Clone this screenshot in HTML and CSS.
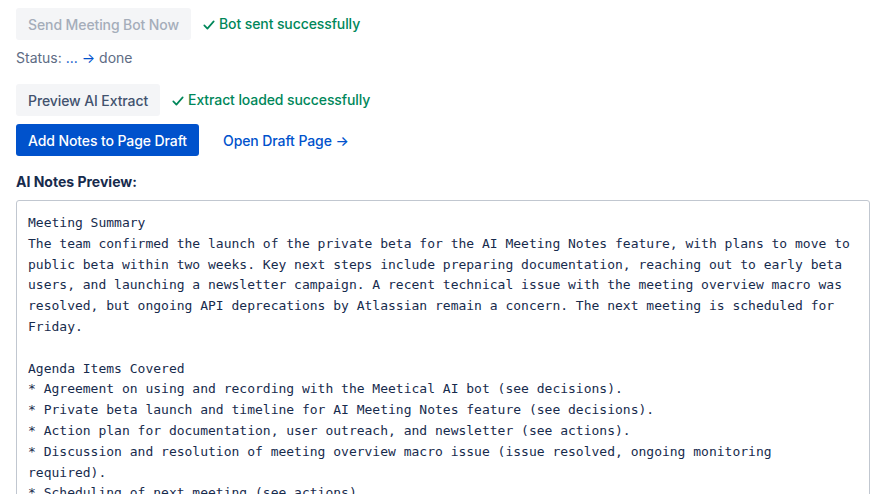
FILE: index.html
```html
<!DOCTYPE html>
<html lang="en">
<head>
<meta charset="utf-8">
<title>AI Meeting Notes</title>
<link rel="stylesheet" href="styles.css">
</head>
<body>
<main class="panel">
  <div class="row">
    <button class="btn btn-disabled" disabled>Send Meeting Bot Now</button>
    <span class="success"><svg class="check" width="12" height="12" viewBox="0 0 12 12"><path d="M1.3 6.4 L4.4 9.6 L10.7 2.4" fill="none" stroke="currentColor" stroke-width="1.7" stroke-linecap="round" stroke-linejoin="round"/></svg>Bot sent successfully</span>
  </div>
  <p class="status">Status: <span class="accent">...</span> <span class="accent">→</span> done</p>
  <div class="row">
    <button class="btn btn-default">Preview AI Extract</button>
    <span class="success"><svg class="check" width="12" height="12" viewBox="0 0 12 12"><path d="M1.3 6.4 L4.4 9.6 L10.7 2.4" fill="none" stroke="currentColor" stroke-width="1.7" stroke-linecap="round" stroke-linejoin="round"/></svg>Extract loaded successfully</span>
  </div>
  <div class="row row-tight">
    <button class="btn btn-primary">Add Notes to Page Draft</button>
    <a class="btn btn-link" href="#">Open Draft Page →</a>
  </div>
  <h3 class="label">AI Notes Preview:</h3>
  <div class="notes">Meeting Summary
The team confirmed the launch of the private beta for the AI Meeting Notes feature, with plans to move to public beta within two weeks. Key next steps include preparing documentation, reaching out to early beta users, and launching a newsletter campaign. A recent technical issue with the meeting overview macro was resolved, but ongoing API deprecations by Atlassian remain a concern. The next meeting is scheduled for Friday.

Agenda Items Covered
* Agreement on using and recording with the Meetical AI bot (see decisions).
* Private beta launch and timeline for AI Meeting Notes feature (see decisions).
* Action plan for documentation, user outreach, and newsletter (see actions).
* Discussion and resolution of meeting overview macro issue (issue resolved, ongoing monitoring required).
* Scheduling of next meeting (see actions).
</div>
</main>
</body>
</html>
```
FILE: styles.css
```css
* { box-sizing: border-box; }
html, body { margin: 0; padding: 0; background: #ffffff; }
body {
  font-family: Inter, "Liberation Sans", sans-serif;
  font-size: 14px;
  color: #172b4d;
}
.panel {
  padding: 8px 7px 0 16px;
  height: 494px;
  overflow: hidden;
}
.row {
  display: flex;
  align-items: center;
  gap: 12px;
}
.btn {
  height: 32px;
  padding: 0 12px;
  border: none;
  border-radius: 3px;
  font-family: inherit;
  font-size: 14px;
  font-weight: 500;
  display: inline-flex;
  align-items: center;
  text-decoration: none;
  letter-spacing: -0.1px;
}
.btn-disabled { background: #f4f5f7; color: #a5adba; }
.btn-default { background: #f4f5f7; color: #42526e; }
.btn-primary { background: #0052cc; color: #ffffff; }
.btn-link { background: transparent; color: #0052cc; }
.success {
  display: inline-flex;
  align-items: center;
  gap: 4px;
  color: #00875a;
  font-weight: 500;
  letter-spacing: -0.1px;
  line-height: 20px;
}
.check {
  display: block;
  margin-top: 1px;
}
.status {
  margin: 8px 0 16px;
  line-height: 20px;
  color: #5e6c84;
}
.accent { color: #0052cc; }
.row-tight { margin-top: 8px; }
.label {
  margin: 16px 0 8px;
  font-size: 14px;
  font-weight: 700;
  line-height: 20px;
  color: #172b4d;
}
.notes {
  border: 1px solid #c1c7d0;
  border-radius: 3px;
  padding: 12px 16px 11px 11px;
  font-family: "DejaVu Sans Mono", monospace;
  font-size: 13px;
  line-height: 20.8px;
  color: #172b4d;
  white-space: pre-wrap;
  height: 300px;
  overflow: hidden;
}
```
